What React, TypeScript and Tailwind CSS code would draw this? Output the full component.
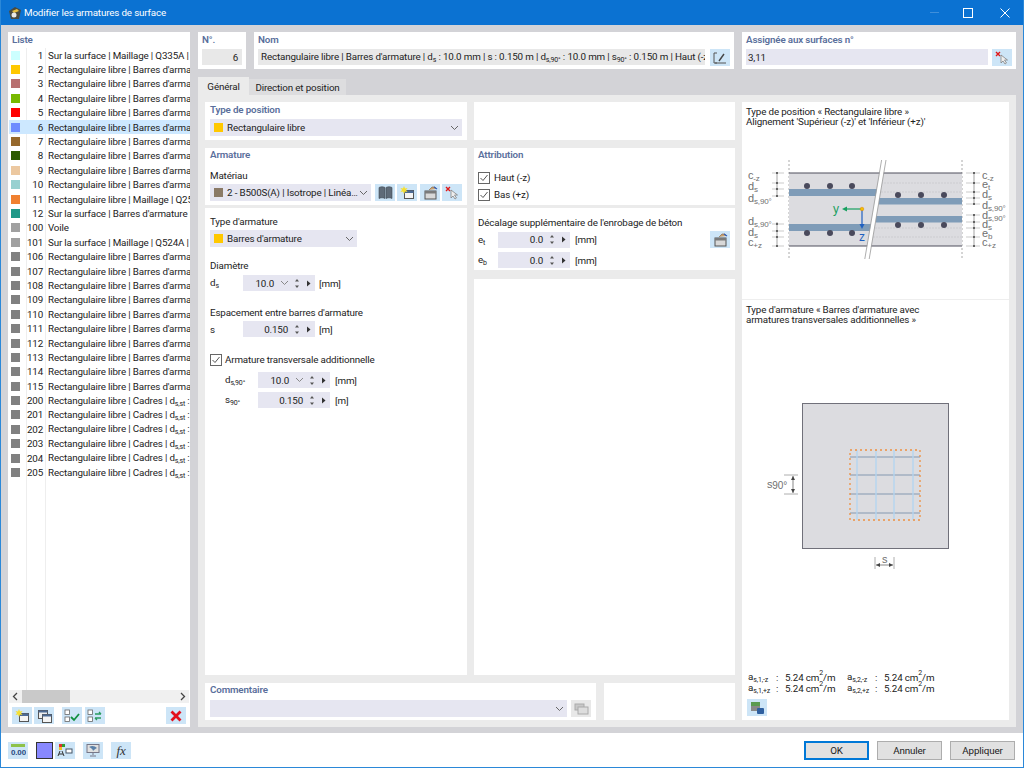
import React from "react";

const rows: [string, string, string][] = [
  ["#ccffff", "1", "Sur la surface | Maillage | Q335A | Haut"],
  ["#ffc800", "2", "Rectangulaire libre | Barres d'armature"],
  ["#b87070", "3", "Rectangulaire libre | Barres d'armature"],
  ["#78b800", "4", "Rectangulaire libre | Barres d'armature"],
  ["#ff0000", "5", "Rectangulaire libre | Barres d'armature"],
  ["#6e8cff", "6", "Rectangulaire libre | Barres d'armature"],
  ["#96682c", "7", "Rectangulaire libre | Barres d'armature"],
  ["#2c5a00", "8", "Rectangulaire libre | Barres d'armature"],
  ["#ecc8a0", "9", "Rectangulaire libre | Barres d'armature"],
  ["#98d0d0", "10", "Rectangulaire libre | Barres d'armature"],
  ["#f08030", "11", "Rectangulaire libre | Maillage | Q257A"],
  ["#209888", "12", "Sur la surface | Barres d'armature | ds"],
  ["#a0a0a0", "100", "Voile"],
  ["#a0a0a0", "101", "Sur la surface | Maillage | Q524A | Haut"],
  ...["106", "107", "108", "109", "110", "111", "112", "113", "114", "115"].map(
    (n) => ["#808080", n, "Rectangulaire libre | Barres d'armature"] as [string, string, string]
  ),
  ...["200", "201", "202", "203", "204", "205"].map(
    (n) => ["#808080", n, "CADRES"] as [string, string, string]
  ),
];

const Sub = ({ children }: { children: React.ReactNode }) => (
  <span className="text-[7px] leading-none align-[-2px]">{children}</span>
);

const Chevron = ({ color = "#666" }: { color?: string }) => (
  <svg width="9" height="6" viewBox="0 0 9 6" className="shrink-0">
    <path d="M1 1l3.5 3.5L8 1" fill="none" stroke={color} strokeWidth="1" />
  </svg>
);

const Spin = () => (
  <span className="flex items-center gap-[6px] shrink-0 ml-[6px] mr-[4px]">
    <svg width="6" height="13" viewBox="0 0 6 13">
      <path d="M3 2L5 4.5H1z M3 11L1 8.5H5z" fill="#555" />
    </svg>
    <svg width="5" height="7" viewBox="0 0 5 7">
      <path d="M1 0.5L4.5 3.5L1 6.5z" fill="#333" />
    </svg>
  </span>
);

const Num = ({ value, chevron, className }: { value: string; chevron?: boolean; className: string }) => (
  <div className={`h-[16px] bg-[#e6e6f1] flex items-center justify-end ${className}`}>
    <span>{value}</span>
    {chevron && <span className="ml-[6px] -mr-[1px]"><Chevron color="#888" /></span>}
    <Spin />
  </div>
);

const Select = ({ swatch, text, className }: { swatch?: string; text?: string; className: string }) => (
  <div className={`h-[17px] bg-[#e6e6f1] flex items-center pl-[4px] pr-[3px] ${className}`}>
    {swatch && <span className="w-[9px] h-[9px] mr-[4px] shrink-0" style={{ background: swatch }} />}
    <span className="flex-1 truncate">{text}</span>
    <Chevron />
  </div>
);

const Heading = ({ children }: { children: React.ReactNode }) => (
  <div className="text-[#5a6f9c] font-semibold leading-[13px] -mt-px mb-px">{children}</div>
);

const Check = () => (
  <svg width="12" height="12" viewBox="0 0 12 12" className="shrink-0">
    <rect x="0.5" y="0.5" width="11" height="11" fill="#fff" stroke="#666" />
    <path d="M2.5 6l2.5 2.5L9.5 3" fill="none" stroke="#555" strokeWidth="1" />
  </svg>
);

const Btn = ({ children, className = "", grey }: { children?: React.ReactNode; className?: string; grey?: boolean }) => (
  <div className={`w-[20px] h-[17px] flex items-center justify-center shrink-0 ${grey ? "bg-[#e8e8e8]" : "bg-[#cde5f7]"} ${className}`}>
    {children}
  </div>
);

const Win = ({ star }: { star?: boolean }) => (
  <svg width="15" height="14" viewBox="0 0 15 14">
    <rect x="4.5" y="4.5" width="9" height="8" fill="#f4f4f4" stroke="#555" />
    <rect x="4.5" y="4.5" width="9" height="2.5" fill="#4c6a94" />
    {star && <path d="M4 0l1 2.5L7.5 2 6 4l1.5 2L5 5.5 4 8 3 5.5.5 6 2 4 .5 2 3 2.5z" fill="#f6e030" />}
  </svg>
);
const Win2 = () => (
  <svg width="15" height="14" viewBox="0 0 15 14">
    <rect x="1.5" y="1.5" width="9" height="8" fill="#eee" stroke="#555" />
    <rect x="1.5" y="1.5" width="9" height="2" fill="#4c6a94" />
    <rect x="5.5" y="5.5" width="9" height="8" fill="#f4f4f4" stroke="#555" />
    <rect x="5.5" y="5.5" width="9" height="2" fill="#4c6a94" />
  </svg>
);
const Checks = ({ swap }: { swap?: boolean }) => (
  <svg width="16" height="14" viewBox="0 0 16 14">
    <rect x="1" y="1" width="4.5" height="4.5" fill="#fff" stroke="#666" strokeWidth="0.8" />
    <rect x="1" y="8" width="4.5" height="4.5" fill="#fff" stroke="#666" strokeWidth="0.8" />
    {swap ? (
      <path d="M8 5h6M14 5l-2-2M14 9H8M8 9l2 2" fill="none" stroke="#2a9a60" strokeWidth="1.3" />
    ) : (
      <path d="M7 8l3 3 5-6" fill="none" stroke="#109040" strokeWidth="1.8" />
    )}
  </svg>
);
const Book = () => (
  <svg width="15" height="13" viewBox="0 0 15 13">
    <path d="M1 1.5c2-1 4-1 6 0v11c-2-1-4-1-6 0zM8 1.5c2-1 4-1 6 0v11c-2-1-4-1-6 0z" fill="#5f6b78" stroke="#3e4852" strokeWidth="0.6" />
  </svg>
);
const Folder = () => (
  <svg width="15" height="14" viewBox="0 0 15 14">
    <rect x="2" y="5" width="11" height="8" fill="#d8d8d8" stroke="#555" />
    <rect x="2" y="5" width="11" height="2.5" fill="#7a7a7a" />
    <path d="M6 4l3-3h3l1 2" fill="#c8a070" stroke="#806040" strokeWidth="0.6" />
    <path d="M11 1l3 2" stroke="#3060c0" strokeWidth="1.2" />
  </svg>
);
const Cursor = () => (
  <svg width="15" height="14" viewBox="0 0 15 14">
    <path d="M1 1l4 4M5 1L1 5" stroke="#e01818" strokeWidth="1.4" />
    <path d="M6 4v8l2-2 2 3 1.5-1-2-3h3z" fill="#eee" stroke="#777" strokeWidth="0.7" />
  </svg>
);

const DimLabel = ({ x, y, main, sub }: { x: number; y: number; main: string; sub: string }) => (
  <text x={x} y={y} fontSize="11" fill="#707070" fontFamily="'Liberation Sans',sans-serif">
    {main}
    <tspan fontSize="8" dy="2">{sub}</tspan>
  </text>
);

const Section = () => (
  <svg width="267" height="165" viewBox="742 130 267 165" className="block">
    <line x1="789" y1="160" x2="789" y2="258" stroke="#aaa" strokeDasharray="2 2" />
    <line x1="962" y1="160" x2="962" y2="258" stroke="#aaa" strokeDasharray="2 2" />
    <rect x="789" y="173" width="173" height="73" fill="#dcdce0" />
    <rect x="789" y="189" width="90" height="7" fill="#7f9cb8" />
    <rect x="789" y="224" width="84" height="7" fill="#7f9cb8" />
    <rect x="879" y="198" width="83" height="6.5" fill="#7f9cb8" />
    <rect x="876" y="216" width="86" height="6.5" fill="#7f9cb8" />
    <path d="M881 183H962M881 192H962M872 228H962M870 237H962" stroke="#c4c4c8" strokeWidth="0.6" strokeDasharray="2 1" />
    <line x1="789" y1="173" x2="962" y2="173" stroke="#4f4f5c" strokeWidth="1.2" />
    <line x1="789" y1="246" x2="962" y2="246" stroke="#4f4f5c" strokeWidth="1.2" />
    <path d="M883.8 160L867 259" stroke="#fff" strokeWidth="4" />
    <path d="M881.6 160L864.8 259M886 160L869.2 259" stroke="#999" strokeWidth="0.8" />
    {[807, 830, 852].map((x) => (
      <g key={x}>
        <circle cx={x} cy="186" r="3" fill="#4a4a5c" />
        <circle cx={x} cy="233" r="3" fill="#4a4a5c" />
      </g>
    ))}
    {[898, 921, 944].map((x) => (
      <g key={x}>
        <circle cx={x} cy="195" r="3" fill="#4a4a5c" />
        <circle cx={x} cy="225" r="3" fill="#4a4a5c" />
      </g>
    ))}
    <path d="M862 209H846" stroke="#18a060" strokeWidth="1.2" />
    <path d="M842 209l5-2.5v5z" fill="#18a060" />
    <path d="M862 209v16" stroke="#2060c0" strokeWidth="1.2" />
    <path d="M862 229l-2.5-5h5z" fill="#2060c0" />
    <circle cx="862" cy="209" r="1.8" fill="#f4c000" stroke="#e08000" strokeWidth="0.5" />
    <text x="833" y="213" fontSize="12" fill="#18a060" fontFamily="'Liberation Sans',sans-serif">y</text>
    <text x="859" y="241" fontSize="12" fill="#2060c0" fontFamily="'Liberation Sans',sans-serif">z</text>
    <path d="M777 172v25M777 222v25M974 172v33M974 214v33" stroke="#666" strokeWidth="0.6" />
    {[173, 183, 189, 196, 224, 231, 237, 246].map((y) => (
      <g key={y}>
        <line x1="772" y1={y} x2="784" y2={y} stroke="#aaa" strokeWidth="0.6" />
        <circle cx="777" cy={y} r="1" fill="#444" />
      </g>
    ))}
    {[173, 183, 192, 198, 204, 215, 222, 228, 237, 246].map((y) => (
      <g key={y}>
        <line x1="966" y1={y} x2="980" y2={y} stroke="#aaa" strokeWidth="0.6" />
        <circle cx="974" cy={y} r="1" fill="#444" />
      </g>
    ))}
    <DimLabel x={748} y={179} main="c" sub="-z" />
    <DimLabel x={748} y={190} main="d" sub="s" />
    <DimLabel x={748} y={202} main="d" sub="s,90°" />
    <DimLabel x={748} y={225} main="d" sub="s,90°" />
    <DimLabel x={748} y={236} main="d" sub="s" />
    <DimLabel x={748} y={246} main="c" sub="+z" />
    <DimLabel x={982} y={179} main="c" sub="-z" />
    <DimLabel x={982} y={188} main="e" sub="t" />
    <DimLabel x={982} y={198} main="d" sub="s" />
    <DimLabel x={982} y={209} main="d" sub="s,90°" />
    <DimLabel x={982} y={219} main="d" sub="s,90°" />
    <DimLabel x={982} y={228} main="d" sub="s" />
    <DimLabel x={982} y={237} main="e" sub="b" />
    <DimLabel x={982} y={246} main="c" sub="+z" />
  </svg>
);

const Plan = () => (
  <svg width="267" height="180" viewBox="742 395 267 180" className="block">
    <rect x="802.5" y="403.5" width="146" height="145" fill="#dcdce0" stroke="#70707a" strokeWidth="1" />
    {[457, 475, 494, 513].map((y) => (
      <line key={y} x1="850" y1={y} x2="920" y2={y} stroke="#8398b0" strokeWidth="1.2" />
    ))}
    {[857, 876, 894, 913].map((x) => (
      <line key={x} x1={x} y1="450" x2={x} y2="520" stroke="#b4d4f0" strokeWidth="1.4" />
    ))}
    <rect x="850" y="450" width="70" height="70" fill="none" stroke="#ee9040" strokeWidth="1.3" strokeDasharray="2 3" />
    <path d="M784 475H798M784 494H798" stroke="#999" strokeWidth="0.8" />
    <path d="M793 476v17" stroke="#555" strokeWidth="0.7" />
    <path d="M793 476l-2 4h4zM793 493l-2-4h4z" fill="#444" />
    <text x="767" y="488" fontSize="11" fill="#707070" fontFamily="'Liberation Sans',sans-serif">s<tspan fontSize="10" dy="1">90°</tspan></text>
    <path d="M875 557v12M894 557v12" stroke="#999" strokeWidth="0.8" />
    <path d="M876 565H893" stroke="#555" strokeWidth="0.7" />
    <path d="M876 565l4-2v4zM893 565l-4-2v4z" fill="#444" />
    <text x="882" y="563" fontSize="11" fill="#707070" fontFamily="'Liberation Sans',sans-serif">s</text>
  </svg>
);

const Result = ({ a, b }: { a: string; b: string }) => (
  <div className="flex h-[11px] items-center leading-[11px]">
    <span className="w-[28px]">a<Sub>{a}</Sub></span>
    <span className="w-[9px]">:</span>
    <span className="w-[62px]">5.24 cm<sup className="text-[7px] align-[3px] leading-none">2</sup>/m</span>
    <span className="w-[28px]">a<Sub>{b}</Sub></span>
    <span className="w-[9px]">:</span>
    <span>5.24 cm<sup className="text-[7px] align-[3px] leading-none">2</sup>/m</span>
  </div>
);

export default function App() {
  return (
    <div
      className="w-[1024px] h-[768px] flex flex-col overflow-hidden text-[9.8px] tracking-[-0.15px] leading-[13px] text-[#222] border-x border-b border-[#2b88d8] bg-white"
      style={{ fontFamily: "Roboto,'Noto Sans',sans-serif" }}
    >
      {/* Title bar */}
      <div className="h-[25px] -mx-px bg-[#0b72d2] flex items-center text-white shrink-0">
        <svg width="14" height="14" viewBox="0 0 14 14" className="ml-[8px]">
          <path d="M1 5l6-4 6 3-2 9-8 0z" fill="#4a4a40" />
          <path d="M4 5l5-2 2 2-5 2z" fill="#e8c040" />
          <circle cx="6" cy="9" r="2.5" fill="#e8e8e8" />
        </svg>
        <span className="ml-[2px]">Modifier les armatures de surface</span>
        <div className="ml-auto flex items-center">
          <span className="w-[9px] h-px bg-[#3f8fdb] mr-[24px]" />
          <span className="w-[10px] h-[10px] border border-white mr-[27px]" />
          <svg width="10" height="10" viewBox="0 0 10 10" className="mr-[14px]">
            <path d="M0.5 0.5l9 9M9.5 0.5l-9 9" stroke="#fff" strokeWidth="1" />
          </svg>
        </div>
      </div>

      {/* Main */}
      <div className="h-[708px] bg-[#d3d3d7] flex pl-[7px] pt-[7px] shrink-0">
        {/* List */}
        <div className="w-[182px] h-[695px] bg-white flex flex-col shrink-0 relative">
          <div className="pl-[4px] pt-[2px] h-[16px]"><Heading>Liste</Heading></div>
          <div className="h-[642px] flex flex-col overflow-hidden pl-px relative">
            <div className="absolute left-[18px] top-0 bottom-0 w-px bg-[#eeeeee]" />
            <div className="absolute left-[37px] top-0 bottom-0 w-px bg-[#eeeeee]" />
            {rows.map(([c, n, t]) => (
              <div key={n} className={`h-[14.4px] flex items-center shrink-0 relative ${n === "6" ? "bg-[#cde8ff]" : ""}`}>
                <span className="w-[9px] h-[9px] ml-[2px] shrink-0" style={{ background: c }} />
                <span className="w-[23px] text-right shrink-0">{n}</span>
                <span className="ml-[5px] whitespace-nowrap">
                  {t === "CADRES" ? <>Rectangulaire libre | Cadres | d<Sub>s,st</Sub> : 8.0 mm</> : t}
                </span>
              </div>
            ))}
          </div>
          <div className="h-[13px] mx-px bg-[#f0f0f0] flex items-center justify-between shrink-0 relative z-10">
            <svg width="13" height="13" viewBox="0 0 13 13"><path d="M8 3L4.5 6.5L8 10" fill="none" stroke="#444" strokeWidth="1.3" /></svg>
            <div className="w-[48px] h-[13px] bg-[#c9c9c9] mr-auto" />
            <svg width="13" height="13" viewBox="0 0 13 13"><path d="M5 3L8.5 6.5L5 10" fill="none" stroke="#444" strokeWidth="1.3" /></svg>
          </div>
          <div className="flex items-center mt-[4px] pl-[4px]">
            <Btn><Win star /></Btn>
            <Btn className="ml-[2px]"><Win2 /></Btn>
            <Btn className="ml-[8px]"><Checks /></Btn>
            <Btn className="ml-[3px]"><Checks swap /></Btn>
            <Btn className="ml-[61px]">
              <svg width="12" height="12" viewBox="0 0 12 12"><path d="M1.5 1.5l9 9M10.5 1.5l-9 9" stroke="#e3101c" strokeWidth="2.8" /></svg>
            </Btn>
          </div>
        </div>

        {/* Right side */}
        <div className="ml-[8px] w-[818px] flex flex-col shrink-0">
          {/* Top row */}
          <div className="flex h-[37px] shrink-0">
            <div className="w-[48px] bg-white px-[4px] pt-[2px]">
              <Heading>N°.</Heading>
              <div className="mt-[3px] h-[16px] bg-[#e8e8e8] flex items-center justify-end pr-[4px]">6</div>
            </div>
            <div className="w-[480px] ml-[8px] bg-white px-[4px] pt-[2px]">
              <Heading>Nom</Heading>
              <div className="mt-[3px] flex">
                <div className="w-[448px] h-[16px] bg-[#e8e8e8] flex items-center pl-[3px] overflow-hidden whitespace-nowrap">
                  <span>Rectangulaire libre | Barres d'armature | d<Sub>s</Sub>&nbsp;: 10.0 mm | s : 0.150 m | d<Sub>s,90°</Sub>&nbsp;: 10.0 mm | s<Sub>90°</Sub>&nbsp;: 0.150 m | Haut (-z) | Bas (+z)</span>
                </div>
                <Btn className="ml-[5px] h-[16px]">
                  <svg width="14" height="12" viewBox="0 0 14 12">
                    <path d="M4 1H1v10h3M2 11h11" fill="none" stroke="#555" />
                    <path d="M6 9l5-7" stroke="#444" strokeWidth="1.4" />
                  </svg>
                </Btn>
              </div>
            </div>
            <div className="w-[274px] ml-[8px] bg-white px-[4px] pt-[2px]">
              <Heading>Assignée aux surfaces n°</Heading>
              <div className="mt-[3px] flex">
                <div className="w-[242px] h-[16px] bg-[#e6e6f1] flex items-center pl-[2px]">3,11</div>
                <Btn className="ml-[4px] h-[16px]"><Cursor /></Btn>
              </div>
            </div>
          </div>

          {/* Tabs */}
          <div className="flex items-end h-[18px] mt-[8px] shrink-0">
            <div className="w-[51px] h-[18px] pt-[1px] bg-[#ebebeb] flex items-center justify-center">Général</div>
            <div className="w-[97px] h-[16px] bg-[#dddddf] flex items-center justify-center">Direction et position</div>
          </div>

          {/* Tab content */}
          <div className="h-[632px] bg-[#ebebeb] flex pl-[7px] pt-[7px]">
            {/* Column 1 + 2 */}
            <div className="w-[530px] flex flex-col shrink-0">
              <div className="flex gap-[7px] h-[573px]">
                <div className="w-[262px] flex flex-col">
                  <div className="h-[38px] bg-white px-[5px] pt-[2px]">
                    <Heading>Type de position</Heading>
                    <Select swatch="#ffc800" text="Rectangulaire libre" className="mt-[3px] w-[252px]" />
                  </div>
                  <div className="h-[57px] mt-[8px] bg-white px-[5px] pt-[1px]">
                    <Heading>Armature</Heading>
                    <div className="mt-[8px] leading-[13px]">Matériau</div>
                    <div className="flex mt-[2px]">
                      <Select swatch="#8a7a66" text="2 - B500S(A) | Isotrope | Linéaire élastique" className="w-[161px]" />
                      <Btn className="ml-[4px]"><Book /></Btn>
                      <Btn className="ml-[2px]"><Win star /></Btn>
                      <Btn className="ml-[3px]"><Folder /></Btn>
                      <Btn className="ml-[2px]"><Cursor /></Btn>
                    </div>
                  </div>
                  <div className="h-[467px] mt-[3px] bg-white px-[5px] pt-[7px]">
                    <div>Type d'armature</div>
                    <Select swatch="#ffc800" text="Barres d'armature" className="mt-[2px] w-[147px]" />
                    <div className="mt-[12px]">Diamètre</div>
                    <div className="flex items-center mt-[3px]">
                      <span className="w-[33px]">d<Sub>s</Sub></span>
                      <Num value="10.0" chevron className="w-[72px]" />
                      <span className="ml-[4px]">[mm]</span>
                    </div>
                    <div className="mt-[15px]">Espacement entre barres d'armature</div>
                    <div className="flex items-center mt-[2px]">
                      <span className="w-[33px]">s</span>
                      <Num value="0.150" className="w-[72px]" />
                      <span className="ml-[4px]">[m]</span>
                    </div>
                    <div className="flex items-center mt-[16px] h-[13px]">
                      <Check />
                      <span className="ml-[3px]">Armature transversale additionnelle</span>
                    </div>
                    <div className="flex items-center mt-[6px]">
                      <span className="w-[33px] ml-[15px]">d<Sub>s,90°</Sub></span>
                      <Num value="10.0" chevron className="w-[72px]" />
                      <span className="ml-[5px]">[mm]</span>
                    </div>
                    <div className="flex items-center mt-[4px]">
                      <span className="w-[33px] ml-[15px]">s<Sub>90°</Sub></span>
                      <Num value="0.150" className="w-[72px]" />
                      <span className="ml-[5px]">[m]</span>
                    </div>
                  </div>
                </div>
                <div className="w-[261px] flex flex-col">
                  <div className="h-[38px] bg-white" />
                  <div className="h-[57px] mt-[8px] bg-white px-[4px] pt-[1px]">
                    <Heading>Attribution</Heading>
                    <div className="flex items-center mt-[10px] h-[13px]"><Check /><span className="ml-[4px]">Haut (-z)</span></div>
                    <div className="flex items-center mt-[4px] h-[13px]"><Check /><span className="ml-[4px]">Bas (+z)</span></div>
                  </div>
                  <div className="h-[62px] mt-[3px] bg-white px-[4px] pt-[8px]">
                    <div>Décalage supplémentaire de l'enrobage de béton</div>
                    <div className="flex items-center mt-[2px]">
                      <span className="w-[20px]">e<Sub>t</Sub></span>
                      <Num value="0.0" className="w-[72px]" />
                      <span className="ml-[5px]">[mm]</span>
                      <Btn className="ml-auto mr-[1px]"><Folder /></Btn>
                    </div>
                    <div className="flex items-center mt-[4px]">
                      <span className="w-[20px]">e<Sub>b</Sub></span>
                      <Num value="0.0" className="w-[72px]" />
                      <span className="ml-[5px]">[mm]</span>
                    </div>
                  </div>
                  <div className="h-[396px] mt-[9px] bg-white" />
                </div>
              </div>
              <div className="flex mt-[8px] h-[37px]">
                <div className="w-[391px] bg-white px-[5px] pt-[1px]">
                  <Heading>Commentaire</Heading>
                  <div className="flex mt-[4px]">
                    <Select className="w-[358px]" />
                    <Btn grey className="ml-[4px]">
                      <svg width="15" height="12" viewBox="0 0 15 12">
                        <rect x="1" y="1" width="9" height="6" fill="#c8c8c8" stroke="#aaa" />
                        <rect x="4" y="4" width="10" height="7" fill="#ddd" stroke="#aaa" />
                      </svg>
                    </Btn>
                  </div>
                </div>
                <div className="w-[131px] ml-[8px] bg-white" />
              </div>
            </div>

            {/* Column 3 */}
            <div className="w-[267px] ml-[7px] h-[618px] bg-white flex flex-col shrink-0">
              <div className="h-[198px] border-b border-[#eeeeee] shrink-0">
                <div className="pl-[4px] pt-[5px] leading-[10px] h-[28px]">
                  <div>Type de position « Rectangulaire libre »</div>
                  <div>Alignement 'Supérieur (-z)' et 'Inférieur (+z)'</div>
                </div>
                <Section />
              </div>
              <div className="pl-[4px] pt-[5px] leading-[10px] h-[25px]">
                <div>Type d'armature « Barres d'armature avec</div>
                <div>armatures transversales additionnelles »</div>
              </div>
              <div className="mt-[70px]"><Plan /></div>
              <div className="pl-[6px] mt-[97px]">
                <Result a="s,1,-z" b="s,2,-z" />
                <Result a="s,1,+z" b="s,2,+z" />
              </div>
              <Btn className="ml-[5px] mt-[5px]">
                <svg width="15" height="14" viewBox="0 0 15 14">
                  <rect x="1" y="1" width="9" height="8" fill="#5a9a50" />
                  <rect x="1" y="5" width="9" height="5" fill="#888" />
                  <rect x="7" y="7" width="7" height="6" rx="1" fill="#2f5f9f" />
                </svg>
              </Btn>
            </div>
          </div>
        </div>
      </div>

      {/* Footer */}
      <div className="flex-1 flex items-center pl-[7px] pr-[8px] relative">
        <Btn>
          <svg width="16" height="14" viewBox="0 0 16 14">
            <rect x="1" y="1" width="14" height="3" fill="#8ec24a" />
            <text x="1" y="12" fontSize="8" fontWeight="700" fill="#2a4a80" fontFamily="'Liberation Sans',sans-serif">0.00</text>
          </svg>
        </Btn>
        <div className="w-[17px] h-[17px] ml-[8px] bg-[#8888ff] border border-[#333] shrink-0" />
        <Btn className="ml-[2px]">
          <svg width="16" height="14" viewBox="0 0 16 14">
            <rect x="2" y="1" width="3" height="3" fill="#e03030" /><rect x="5" y="1" width="3" height="3" fill="#30a030" /><rect x="2" y="4" width="3" height="3" fill="#f0c020" />
            <path d="M3 8l-2 5M5 8l2 5M2 11h4" stroke="#333" />
            <rect x="9" y="6" width="6" height="4" fill="#fff" stroke="#456" />
          </svg>
        </Btn>
        <Btn className="ml-[8px]">
          <svg width="16" height="14" viewBox="0 0 16 14">
            <rect x="2" y="1.5" width="12" height="8" fill="#e0e0e0" stroke="#778" />
            <path d="M4 4c3-2 6-1 8 1-2 1-3 2-4 3 0-2-2-3-4-4z" fill="#5a80a8" />
            <path d="M8 10v2M5 13h6" stroke="#778" />
          </svg>
        </Btn>
        <Btn className="ml-[8px]">
          <span className="italic text-[13px] leading-none text-[#333]" style={{ fontFamily: "'Liberation Serif',serif" }}>fx</span>
        </Btn>
        <div className="ml-auto flex items-center gap-[8px]">
          <div className="w-[65px] h-[19px] bg-[#e1e1e1] border-2 border-[#0078d7] flex items-center justify-center">OK</div>
          <div className="w-[65px] h-[19px] bg-[#e1e1e1] border border-[#adadad] flex items-center justify-center">Annuler</div>
          <div className="w-[65px] h-[19px] bg-[#e1e1e1] border border-[#adadad] flex items-center justify-center">Appliquer</div>
        </div>
      </div>
    </div>
  );
}
